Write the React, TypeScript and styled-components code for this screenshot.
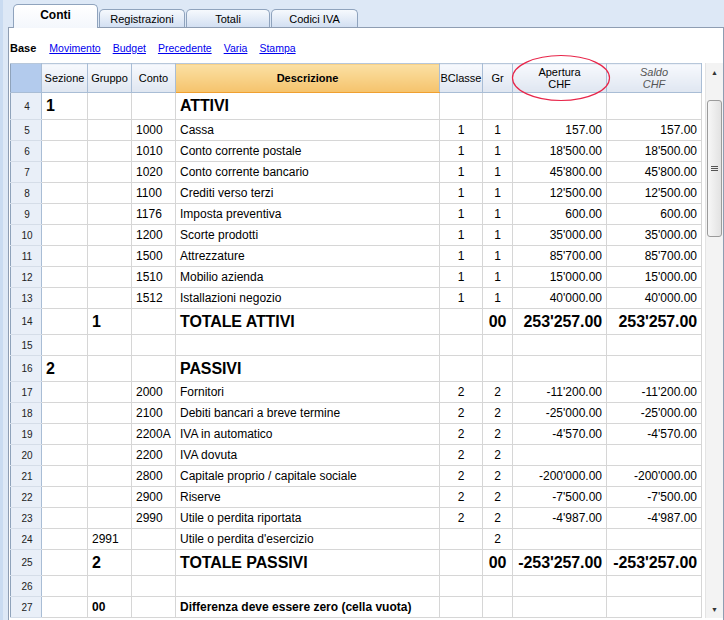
import React from "react";
import styled, { createGlobalStyle, css } from "styled-components";

const GlobalStyle = createGlobalStyle`
  html, body {
    margin: 0;
    padding: 0;
    background: #dde8f6;
    font-family: "Liberation Sans", Arial, sans-serif;
  }
`;

export const Page = styled.div`
  width: 724px;
  height: 620px;
  display: flex;
  flex-direction: column;
  overflow: hidden;
  background: linear-gradient(90deg, #c9dbf1 0, #c9dbf1 3px, #dde8f6 3px);
`;

export const TabBar = styled.div`
  height: 27px;
  display: flex;
  align-items: flex-end;
  gap: 1px;
  background: #dde8f6;
  margin-left: 3px;
  padding-left: 10px;
`;

export const Tab = styled.div<{ $active?: boolean; $w: number }>`
  width: ${(p) => p.$w}px;
  box-sizing: border-box;
  display: flex;
  align-items: center;
  justify-content: center;
  border: 1px solid #8fa3bd;
  border-bottom: none;
  border-radius: 5px 5px 0 0;
  font-size: 11px;
  color: #000;
  ${(p) =>
    p.$active
      ? css`
          height: 24px;
          background: linear-gradient(#ffffff, #f4f7fc);
          font-weight: bold;
          font-size: 12px;
          padding-bottom: 3px;
          margin-bottom: -1px;
          position: relative;
          z-index: 1;
        `
      : css`
          height: 18px;
          background: linear-gradient(#f6f9fd, #d3e0f2);
          padding-top: 1px;
        `}
`;

export const Panel = styled.div`
  flex: 1;
  margin-left: 8px;
  background: #fff;
  border-left: 1px solid #8e9db2;
  border-top: 1px solid #8e9db2;
  border-right: 1px solid #8e9db2;
  display: flex;
  flex-direction: column;
  min-height: 0;
`;

export const LinkBar = styled.div`
  height: 35px;
  box-sizing: border-box;
  padding: 13px 0 0 1px;
  display: flex;
  gap: 12px;
  font-size: 10.5px;
  line-height: 14px;
`;

export const BaseLabel = styled.span`
  font-weight: bold;
  font-size: 11px;
  color: #000;
  margin-right: 1px;
`;

export const NavLink = styled.a`
  color: #0000ee;
  text-decoration: underline;
  cursor: pointer;
`;

export const GridArea = styled.div`
  display: flex;
  padding-left: 1px;
  position: relative;
`;

export const Sheet = styled.table`
  table-layout: fixed;
  border-collapse: collapse;
  width: 691px;
  border-left: 1px solid #8fa3bb;
  border-bottom: 1px solid #7f8a99;
  font-size: 12px;
  color: #000;
`;

export const HeadCell = styled.th<{ $kind?: "corner" | "desc" | "plain"; $italic?: boolean }>`
  height: 28px;
  padding: 0;
  font-size: 11px;
  font-weight: normal;
  line-height: 12px;
  text-align: center;
  border-right: 1px solid #a9bdd5;
  border-bottom: 1px solid #a9bdd5;
  border-top: 1px solid #b7c7da;
  background: linear-gradient(#f7f9fd, #dfe6f1);
  ${(p) => p.$italic && css`font-style: italic; color: #555;`}
  ${(p) =>
    p.$kind === "corner" &&
    css`
      background: #b3cbed;
    `}
  ${(p) =>
    p.$kind === "desc" &&
    css`
      background: linear-gradient(#fbe0a4, #f5c36c);
      border-bottom: 1px solid #f0a030;
      font-weight: bold;
      font-size: 11px;
    `}
`;

export const Row = styled.tr<{ $tall?: boolean; $first?: boolean }>`
  height: ${(p) => (p.$first ? 27 : p.$tall ? 26 : 21)}px;
`;

export const RowNum = styled.td`
  padding: 0 0 0 2px;
  text-align: center;
  font-size: 10px;
  color: #222;
  background: #e9eff8;
  border-right: 1px solid #a9bdd5;
  border-bottom: 1px solid #d5dde8;
`;

export const Cell = styled.td<{ $align?: "left" | "center" | "right"; $big?: boolean; $bold?: boolean }>`
  padding: 0 4px;
  white-space: nowrap;
  overflow: hidden;
  text-align: ${(p) => p.$align ?? "left"};
  border-right: 1px solid #d6d6d6;
  border-bottom: 1px solid #d6d6d6;
  ${(p) => p.$bold && css`font-weight: bold;`}
  ${(p) =>
    p.$big &&
    css`
      font-weight: bold;
      font-size: 16px;
      letter-spacing: -0.1px;
    `}
`;

export const ScrollBar = styled.div`
  width: 17px;
  margin-left: 3px;
  background: #f3f3f3;
  border-left: 1px solid #e4e4e4;
  display: flex;
  flex-direction: column;
  align-items: center;
`;

export const Arrow = styled.div`
  height: 18px;
  width: 100%;
  display: flex;
  align-items: center;
  justify-content: center;
  font-size: 7px;
  color: #333;
`;

export const Thumb = styled.div`
  margin-top: 19px;
  width: 15px;
  height: 137px;
  box-sizing: border-box;
  border: 1px solid #9b9b9b;
  border-radius: 3px;
  background: linear-gradient(90deg, #f7f7f7, #e2e2e2);
  display: flex;
  align-items: center;
  justify-content: center;
`;

export const Filler = styled.div`
  flex: 1;
`;

export const Ring = styled.svg`
  position: absolute;
  left: 502px;
  top: -9px;
  pointer-events: none;
`;

type Line = {
  n: number;
  sez?: string;
  grp?: string;
  conto?: string;
  desc?: string;
  bc?: string;
  gr?: string;
  ap?: string;
  sa?: string;
  big?: boolean;
  bold?: boolean;
};

const rows: Line[] = [
  { n: 4, sez: "1", desc: "ATTIVI", big: true },
  { n: 5, conto: "1000", desc: "Cassa", bc: "1", gr: "1", ap: "157.00", sa: "157.00" },
  { n: 6, conto: "1010", desc: "Conto corrente postale", bc: "1", gr: "1", ap: "18'500.00", sa: "18'500.00" },
  { n: 7, conto: "1020", desc: "Conto corrente bancario", bc: "1", gr: "1", ap: "45'800.00", sa: "45'800.00" },
  { n: 8, conto: "1100", desc: "Crediti verso terzi", bc: "1", gr: "1", ap: "12'500.00", sa: "12'500.00" },
  { n: 9, conto: "1176", desc: "Imposta preventiva", bc: "1", gr: "1", ap: "600.00", sa: "600.00" },
  { n: 10, conto: "1200", desc: "Scorte prodotti", bc: "1", gr: "1", ap: "35'000.00", sa: "35'000.00" },
  { n: 11, conto: "1500", desc: "Attrezzature", bc: "1", gr: "1", ap: "85'700.00", sa: "85'700.00" },
  { n: 12, conto: "1510", desc: "Mobilio azienda", bc: "1", gr: "1", ap: "15'000.00", sa: "15'000.00" },
  { n: 13, conto: "1512", desc: "Istallazioni negozio", bc: "1", gr: "1", ap: "40'000.00", sa: "40'000.00" },
  { n: 14, grp: "1", desc: "TOTALE ATTIVI", gr: "00", ap: "253'257.00", sa: "253'257.00", big: true },
  { n: 15 },
  { n: 16, sez: "2", desc: "PASSIVI", big: true },
  { n: 17, conto: "2000", desc: "Fornitori", bc: "2", gr: "2", ap: "-11'200.00", sa: "-11'200.00" },
  { n: 18, conto: "2100", desc: "Debiti bancari a breve termine", bc: "2", gr: "2", ap: "-25'000.00", sa: "-25'000.00" },
  { n: 19, conto: "2200A", desc: "IVA in automatico", bc: "2", gr: "2", ap: "-4'570.00", sa: "-4'570.00" },
  { n: 20, conto: "2200", desc: "IVA dovuta", bc: "2", gr: "2" },
  { n: 21, conto: "2800", desc: "Capitale proprio / capitale sociale", bc: "2", gr: "2", ap: "-200'000.00", sa: "-200'000.00" },
  { n: 22, conto: "2900", desc: "Riserve", bc: "2", gr: "2", ap: "-7'500.00", sa: "-7'500.00" },
  { n: 23, conto: "2990", desc: "Utile o perdita riportata", bc: "2", gr: "2", ap: "-4'987.00", sa: "-4'987.00" },
  { n: 24, grp: "2991", desc: "Utile o perdita d'esercizio", gr: "2" },
  { n: 25, grp: "2", desc: "TOTALE PASSIVI", gr: "00", ap: "-253'257.00", sa: "-253'257.00", big: true },
  { n: 26 },
  { n: 27, grp: "00", desc: "Differenza deve essere zero (cella vuota)", bold: true },
];

const widths = [31, 46, 44, 44, 264, 43, 30, 94, 95];

const App: React.FC = () => {
  return (
    <Page>
      <GlobalStyle />
      <TabBar>
        <Tab $active $w={85}>Conti</Tab>
        <Tab $w={86}>Registrazioni</Tab>
        <Tab $w={84}>Totali</Tab>
        <Tab $w={87}>Codici IVA</Tab>
      </TabBar>
      <Panel>
        <LinkBar>
          <BaseLabel>Base</BaseLabel>
          <NavLink>Movimento</NavLink>
          <NavLink>Budget</NavLink>
          <NavLink>Precedente</NavLink>
          <NavLink>Varia</NavLink>
          <NavLink>Stampa</NavLink>
        </LinkBar>
        <GridArea>
          <Sheet>
            <colgroup>
              {widths.map((w, i) => (
                <col key={i} style={{ width: w }} />
              ))}
            </colgroup>
            <thead>
              <tr>
                <HeadCell $kind="corner" />
                <HeadCell>Sezione</HeadCell>
                <HeadCell>Gruppo</HeadCell>
                <HeadCell>Conto</HeadCell>
                <HeadCell $kind="desc">Descrizione</HeadCell>
                <HeadCell>BClasse</HeadCell>
                <HeadCell>Gr</HeadCell>
                <HeadCell>
                  Apertura
                  <br />
                  CHF
                </HeadCell>
                <HeadCell $italic>
                  Saldo
                  <br />
                  CHF
                </HeadCell>
              </tr>
            </thead>
            <tbody>
              {rows.map((r) => (
                <Row key={r.n} $tall={r.big} $first={r.n === 4}>
                  <RowNum>{r.n}</RowNum>
                  <Cell $big={r.big}>{r.sez}</Cell>
                  <Cell $big={r.big} $bold={r.bold}>{r.grp}</Cell>
                  <Cell>{r.conto}</Cell>
                  <Cell $big={r.big} $bold={r.bold}>{r.desc}</Cell>
                  <Cell $align="center">{r.bc}</Cell>
                  <Cell $align="center" $big={r.big}>{r.gr}</Cell>
                  <Cell $align="right" $big={r.big}>{r.ap}</Cell>
                  <Cell $align="right" $big={r.big}>{r.sa}</Cell>
                </Row>
              ))}
            </tbody>
          </Sheet>
          <Ring width="100" height="48" viewBox="0 0 100 48">
            <ellipse cx="50" cy="24" rx="48.5" ry="22.5" fill="none" stroke="#e8264a" strokeWidth="1.2" />
          </Ring>
          <ScrollBar>
            <Arrow>▲</Arrow>
            <Thumb>
              <svg width="7" height="7" viewBox="0 0 7 7">
                <path d="M0 1.5h7M0 3.5h7M0 5.5h7" stroke="#555" strokeWidth="1" />
              </svg>
            </Thumb>
            <Filler />
            <Arrow>▼</Arrow>
          </ScrollBar>
        </GridArea>
      </Panel>
    </Page>
  );
};

export default App;
